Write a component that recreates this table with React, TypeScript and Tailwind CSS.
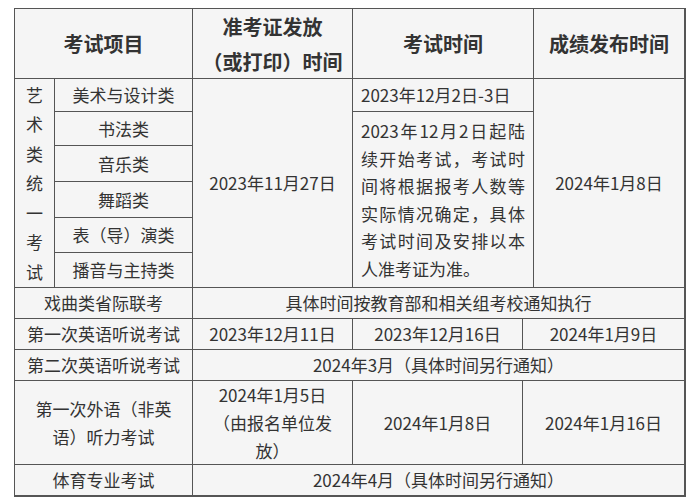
const font = { fontFamily: '"Noto Sans CJK SC", "Noto Sans", sans-serif' }

const cell = 'flex items-center justify-center bg-[#f5f5f5] text-center'

export default function App() {
  return (
    <div className="min-h-[500px] bg-white pl-[14px] pt-2 text-[17px] text-[#333]" style={font}>
      <div className="grid w-[672px] grid-cols-[39px_137px_159px_169px_10px_150px] grid-rows-[69px_32px_33px_35px_35px_34px_34px_30px_30px_30px_83px_30px] gap-px border-b-2 border-r-2 border-[#555] bg-[#555] pl-px pt-px">
        {/* header */}
        <div className={`${cell} col-span-2 col-start-1 row-start-1 text-[20px] font-bold`}>考试项目</div>
        <div className={`${cell} col-start-3 row-start-1 text-[20px] leading-[35px] font-bold`}>
          准考证发放
          <br />
          （或打印）时间
        </div>
        <div className={`${cell} col-span-2 col-start-4 row-start-1 text-[20px] font-bold`}>考试时间</div>
        <div className={`${cell} col-start-6 row-start-1 text-[20px] font-bold`}>成绩发布时间</div>

        {/* art exams */}
        <div className={`${cell} col-start-1 row-span-6 row-start-2 leading-[29.5px]`}>
          艺<br />术<br />类<br />统<br />一<br />考<br />试
        </div>
        <div className={`${cell} col-start-2 row-start-2`}>美术与设计类</div>
        <div className={`${cell} col-start-2 row-start-3`}>书法类</div>
        <div className={`${cell} col-start-2 row-start-4`}>音乐类</div>
        <div className={`${cell} col-start-2 row-start-5`}>舞蹈类</div>
        <div className={`${cell} col-start-2 row-start-6`}>表（导）演类</div>
        <div className={`${cell} col-start-2 row-start-7`}>播音与主持类</div>
        <div className={`${cell} col-start-3 row-span-6 row-start-2`}>2023年11月27日</div>
        <div className="col-span-2 col-start-4 row-start-2 flex items-center bg-[#f5f5f5] px-2">2023年12月2日-3日</div>
        <div className="col-span-2 col-start-4 row-span-5 row-start-3 flex items-center bg-[#f5f5f5] px-2">
          <p className="text-justify leading-[27.5px]">
            2023年12月2日起陆续开始考试，考试时间将根据报考人数等实际情况确定，具体考试时间及安排以本人准考证为准。
          </p>
        </div>
        <div className={`${cell} col-start-6 row-span-6 row-start-2`}>2024年1月8日</div>

        {/* other rows */}
        <div className={`${cell} col-span-2 col-start-1 row-start-8`}>戏曲类省际联考</div>
        <div className={`${cell} col-span-4 col-start-3 row-start-8`}>具体时间按教育部和相关组考校通知执行</div>

        <div className={`${cell} col-span-2 col-start-1 row-start-9`}>第一次英语听说考试</div>
        <div className={`${cell} col-start-3 row-start-9`}>2023年12月11日</div>
        <div className={`${cell} col-start-4 row-start-9`}>2023年12月16日</div>
        <div className={`${cell} col-span-2 col-start-5 row-start-9`}>2024年1月9日</div>

        <div className={`${cell} col-span-2 col-start-1 row-start-10`}>第二次英语听说考试</div>
        <div className={`${cell} col-span-4 col-start-3 row-start-10`}>2024年3月（具体时间另行通知）</div>

        <div className={`${cell} col-span-2 col-start-1 row-start-11 leading-[28px]`}>
          第一次外语（非英
          <br />
          语）听力考试
        </div>
        <div className={`${cell} col-start-3 row-start-11 leading-[28px]`}>
          2024年1月5日
          <br />
          （由报名单位发
          <br />
          放）
        </div>
        <div className={`${cell} col-start-4 row-start-11`}>2024年1月8日</div>
        <div className={`${cell} col-span-2 col-start-5 row-start-11`}>2024年1月16日</div>

        <div className={`${cell} col-span-2 col-start-1 row-start-12`}>体育专业考试</div>
        <div className={`${cell} col-span-4 col-start-3 row-start-12`}>2024年4月（具体时间另行通知）</div>
      </div>
    </div>
  )
}
